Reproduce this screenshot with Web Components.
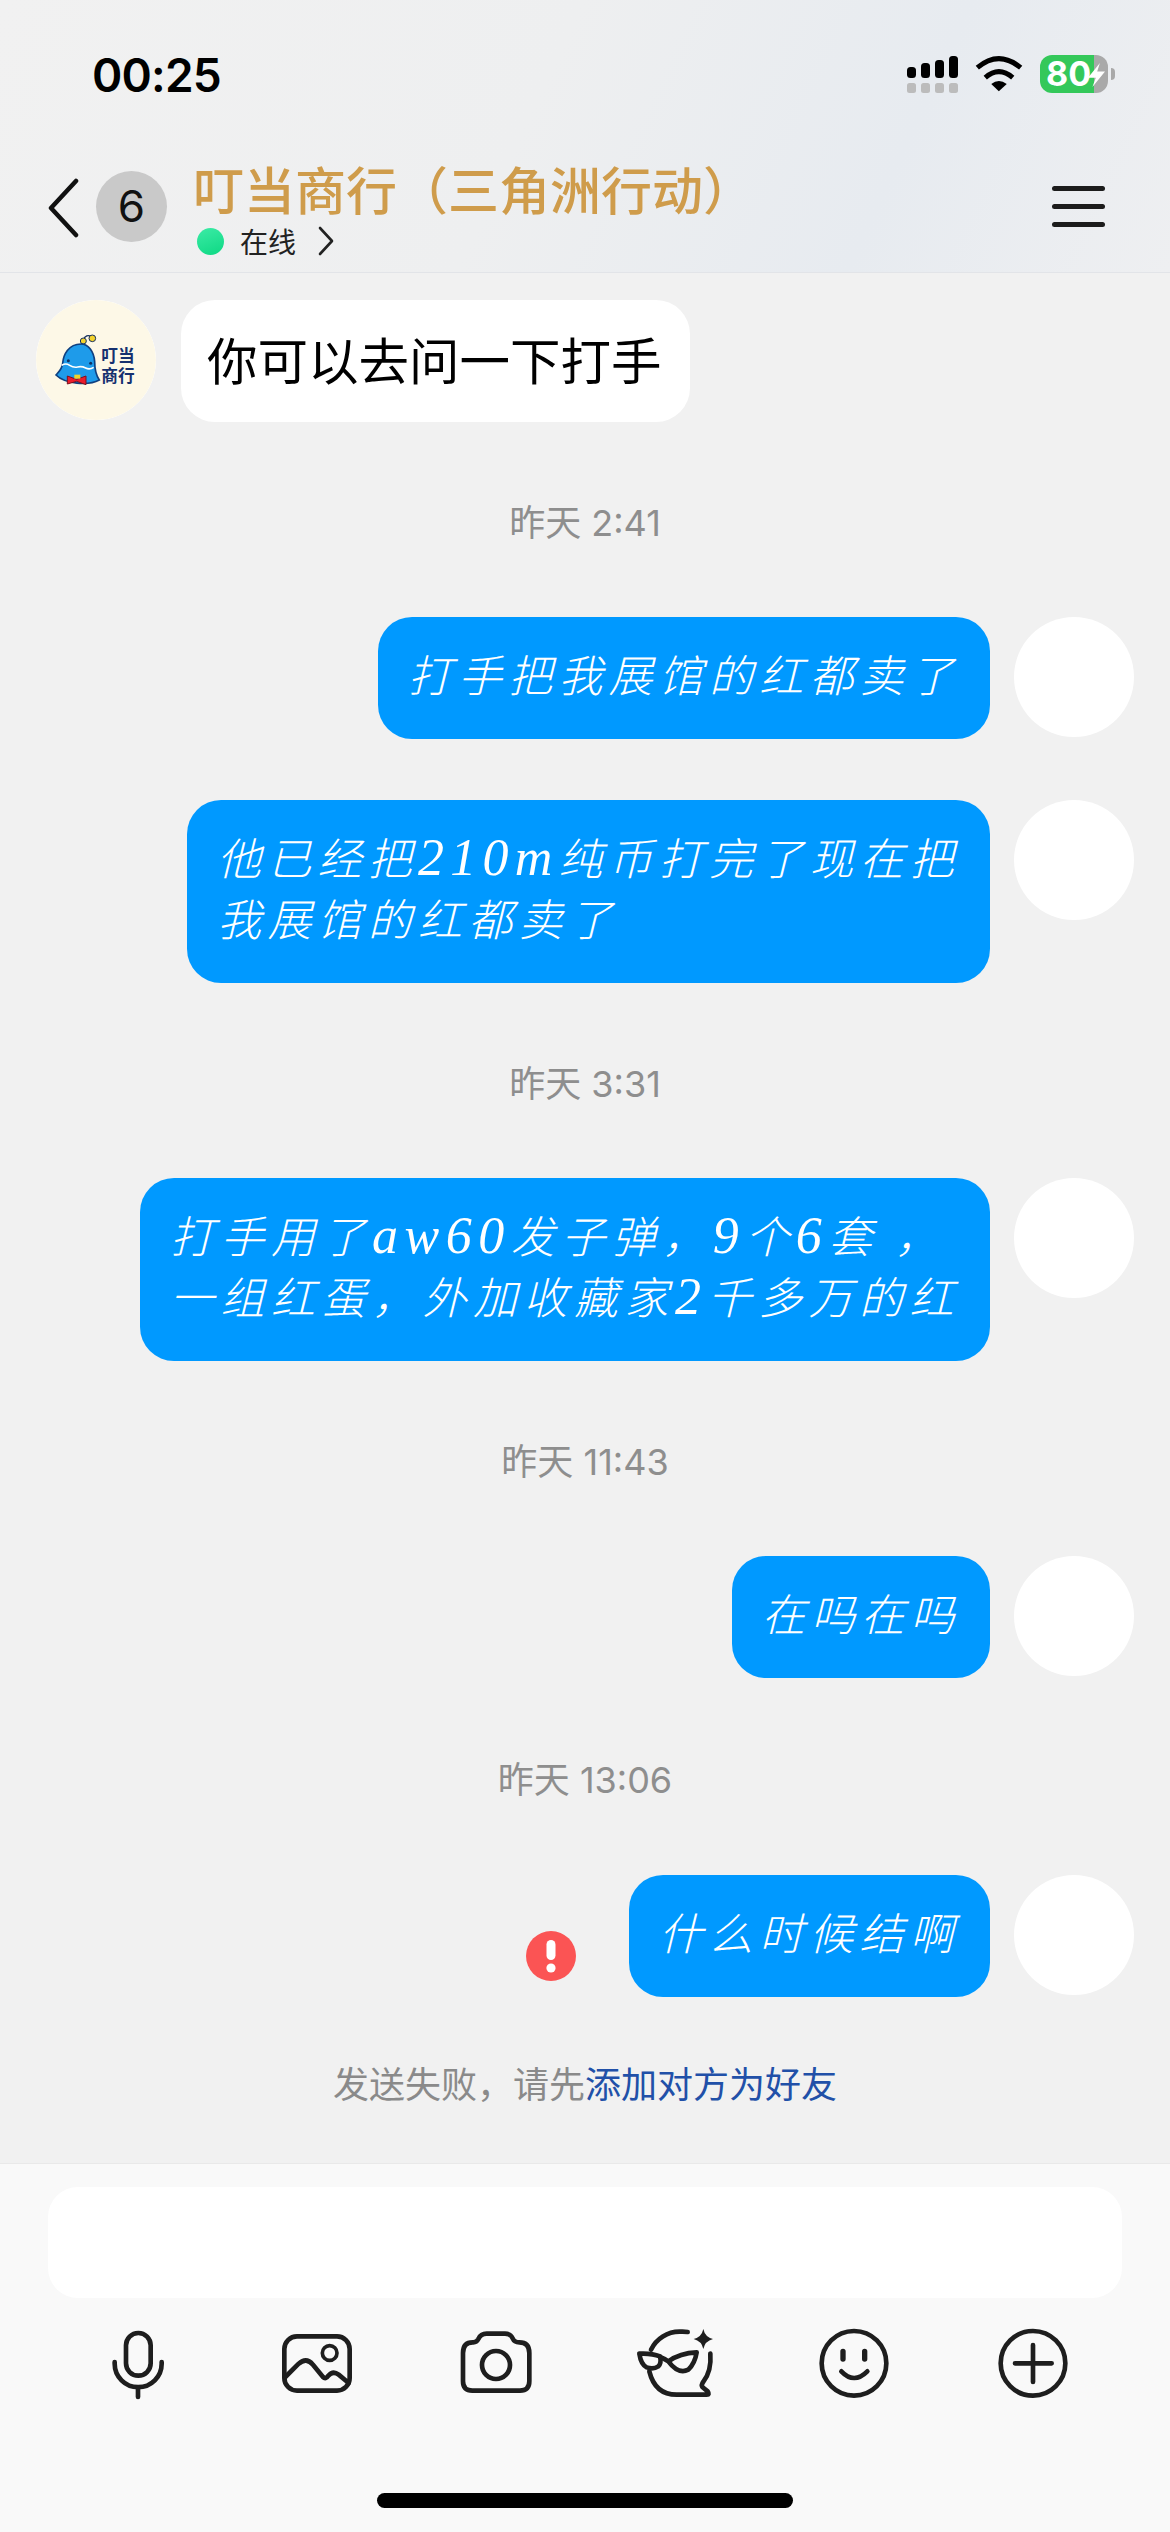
<!DOCTYPE html>
<html lang="zh">
<head>
<meta charset="utf-8">
<title>chat</title>
<style>
  html, body { margin: 0; padding: 0; }
  body {
    width: 1170px;
    height: 2532px;
    overflow: hidden;
    background: #f1f1f1;
    font-family: "Noto Sans CJK SC", "Noto Sans", sans-serif;
  }
  chat-app { height: 2532px; }
</style>
</head>
<body>
<chat-app>
  <chat-header slot="header" title-text="叮当商行（三角洲行动）" badge="6" state="在线"></chat-header>

  <chat-row side="left"><chat-logo slot="avatar"></chat-logo>你可以去问一下打手</chat-row>
  <chat-time>昨天 2:41</chat-time>
  <chat-row>打手把我展馆的红都卖了</chat-row>
  <chat-row class="next">他已经把<i>210m</i>纯币打完了现在把<br>我展馆的红都卖了</chat-row>
  <chat-time>昨天 3:31</chat-time>
  <chat-row style="--track: 6.5px">打手用了<i>aw60</i>发子弹，<i>9</i>个<i>6</i>套 ，<br>一组红蛋，外加收藏家<i>2</i>千多万的红</chat-row>
  <chat-time>昨天 11:43</chat-time>
  <chat-row style="--track: 5.6px">在吗在吗</chat-row>
  <chat-time class="tall">昨天 13:06</chat-time>
  <chat-row failed>什么时候结啊</chat-row>
  <chat-notice>发送失败，请先<a slot="link">添加对方为好友</a></chat-notice>

  <chat-composer slot="footer"></chat-composer>
</chat-app>

<script>
class ChatApp extends HTMLElement {
  constructor() {
    super();
    this.attachShadow({ mode: "open" });
    this.shadowRoot.innerHTML = `
      <style>
        :host { display: flex; flex-direction: column; }
        main { flex: 1; display: flex; flex-direction: column; padding-top: 27px; }
      </style>
      <slot name="header"></slot>
      <main><slot></slot></main>
      <slot name="footer"></slot>
    `;
  }
}

class ChatHeader extends HTMLElement {
  constructor() {
    super();
    this.attachShadow({ mode: "open" });
    const title = this.getAttribute("title-text");
    const badge = this.getAttribute("badge");
    const state = this.getAttribute("state");
    this.shadowRoot.innerHTML = `
      <style>
        :host {
          display: block;
          height: 272px;
          background: linear-gradient(115deg, #f1f1f1 0%, #eeeff0 45%, #e7ebf0 75%, #eeeff1 100%);
          border-bottom: 1px solid #e2e4e8;
          font-family: "Noto Sans CJK SC", sans-serif;
          color: #111;
        }
        .status {
          padding: 55px 55px 0 92px;
          box-sizing: border-box;
          height: 148px;
          display: flex;
          justify-content: space-between;
        }
        .clock {
          font: 600 46px/40px Inter, "Liberation Sans", sans-serif;
          color: #000;
          letter-spacing: -0.8px;
        }
        .sys { display: flex; align-items: flex-start; }
        .signal { width: 51px; height: 37px; margin-top: 1px; }
        .wifi { width: 48px; height: 36px; margin: 1px 17px 0 17px; }
        .battery {
          position: relative;
          width: 68px;
          height: 38px;
          border-radius: 12px;
          background: linear-gradient(90deg, #34c85a 0 54px, #a9a9a9 54px);
          color: #fff;
          font: 700 34px/38px Inter, "Liberation Sans", sans-serif;
          padding-left: 6px;
          box-sizing: border-box;
        }
        .battery svg { position: absolute; left: 48px; top: 8px; width: 17px; height: 24px; }
        .cap { width: 4px; height: 12px; margin: 13px 0 0 3px; background: #a9a9a9; border-radius: 0 4px 4px 0; }
        .nav {
          height: 124px;
          display: flex;
          align-items: flex-start;
          padding-left: 47px;
        }
        .back { width: 33px; height: 60px; margin-top: 30px; flex: none; }
        .badge {
          width: 71px;
          height: 71px;
          margin: 23px 26px 0 16px;
          border-radius: 50%;
          background: #c9c9c9;
          flex: none;
          text-align: center;
          font: 400 44px/71px Inter, "Liberation Sans", sans-serif;
          color: #111;
        }
        .who { flex: 1; }
        .title {
          font-size: 51px;
          line-height: 80px;
          height: 80px;
          color: #cf9c4b;
          font-weight: 500;
          white-space: nowrap;
        }
        .line { display: flex; align-items: center; height: 30px; margin-top: -2px; font-size: 28px; color: #222; }
        .dot {
          width: 27px;
          height: 27px;
          border-radius: 50%;
          margin: 0 16px 0 4px;
          background: linear-gradient(160deg, #3ceba6, #0dd883);
        }
        .more { width: 18px; height: 30px; margin-left: 21px; }
        .menu { width: 53px; margin: 38px 65px 0 0; flex: none; display: flex; flex-direction: column; gap: 13px; }
        .menu span { height: 5px; background: #1c1c1c; border-radius: 3px; }
      </style>
      <div class="status">
        <div class="clock">00:25</div>
        <div class="sys">
          <svg class="signal" viewBox="0 0 51 37">
            <g fill="#000">
              <rect x="0" y="11" width="9" height="11" rx="3.5"/>
              <rect x="14" y="7" width="9" height="15" rx="3.5"/>
              <rect x="28" y="4" width="9" height="18" rx="3.5"/>
              <rect x="42" y="0" width="9" height="22" rx="3.5"/>
            </g>
            <g fill="#bcbcbc">
              <rect x="0" y="27" width="9" height="10" rx="2.5"/>
              <rect x="14" y="27" width="9" height="10" rx="2.5"/>
              <rect x="28" y="27" width="9" height="10" rx="2.5"/>
              <rect x="42" y="27" width="9" height="10" rx="2.5"/>
            </g>
          </svg>
          <svg class="wifi" viewBox="315 78 145 108">
            <g fill="none" stroke="#000" stroke-width="15" stroke-linejoin="round">
              <path d="M322 113 Q387 58 453 113"/>
              <path d="M346 143 Q387 107 429 143"/>
            </g>
            <path d="M387 184 L364 162 Q387 144 411 162 Z" fill="#000"/>
          </svg>
          <div class="battery">80<svg viewBox="655 100 50 70"><path d="M690 100 L655 143 L678 143 L668 170 L705 125 L682 125 Z" fill="#fff"/></svg></div>
          <div class="cap"></div>
        </div>
      </div>
      <div class="nav">
        <svg class="back" viewBox="0 0 33 60"><path d="M29 3 L4 30 L29 57" fill="none" stroke="#111" stroke-width="4.5" stroke-linecap="round" stroke-linejoin="round"/></svg>
        <div class="badge">${badge}</div>
        <div class="who">
          <div class="title">${title}</div>
          <div class="line"><span class="dot"></span>${state}
            <svg class="more" viewBox="0 0 18 30"><path d="M3 2 L15 15 L3 28" fill="none" stroke="#222" stroke-width="2.6" stroke-linecap="round" stroke-linejoin="round"/></svg>
          </div>
        </div>
        <div class="menu"><span></span><span></span><span></span></div>
      </div>
    `;
  }
}

class ChatLogo extends HTMLElement {
  constructor() {
    super();
    this.attachShadow({ mode: "open" });
    this.shadowRoot.innerHTML = `
      <style>
        :host { display: block; width: 120px; height: 120px; }
        svg { display: block; width: 120px; height: 120px; }
        text { font-family: "Noto Sans CJK SC", sans-serif; font-weight: 700; font-size: 50px; fill: #15306f; }
      </style>
      <svg viewBox="48 60 360 360">
        <circle cx="228" cy="240" r="180" fill="#fdf8e7"/>
        <path d="M190 180 Q198 160 215 170" fill="none" stroke="#16305f" stroke-width="4"/>
        <circle cx="190" cy="183" r="9" fill="#f3d22b" stroke="#16305f" stroke-width="3"/>
        <circle cx="217" cy="175" r="10" fill="#f3d22b" stroke="#16305f" stroke-width="3"/>
        <path d="M183 192 C145 192 130 225 128 250 C126 268 116 275 108 285 C135 312 205 318 238 300 C228 285 224 270 224 245 C222 215 205 192 183 192 Z" fill="#1e9bea" stroke="#10407f" stroke-width="5"/>
        <path d="M125 256 q12 -8 24 0 t24 5 t24 3 t24 -2" fill="none" stroke="#fff" stroke-width="5"/>
        <circle cx="145" cy="242" r="4.5" fill="#10305f"/>
        <circle cx="212" cy="250" r="4.5" fill="#10305f"/>
        <path d="M142 288 L170 298 L198 288 L198 314 L170 304 L142 312 Z" fill="#ec1c2b" stroke="#7a1020" stroke-width="3"/>
        <rect x="163" y="284" width="18" height="12" fill="#f3d22b"/>
        <text x="244" y="246">叮当</text>
        <text x="244" y="306">商行</text>
      </svg>
    `;
  }
}

class ChatRow extends HTMLElement {
  constructor() {
    super();
    this.attachShadow({ mode: "open" });
    const left = this.getAttribute("side") === "left";
    const failed = this.hasAttribute("failed");
    this.shadowRoot.innerHTML = `
      <style>
        :host {
          display: flex;
          gap: 24px;
          justify-content: flex-end;
          padding: 0 36px;
        }
        :host([side="left"]) { justify-content: flex-start; gap: 25px; }
        :host(.next) { margin-top: 61px; }
        .avatar { width: 120px; height: 120px; border-radius: 50%; background: #fff; flex: none; overflow: hidden; }
        .bubble {
          background: #0099ff;
          color: #fff;
          border-radius: 34px;
          padding: 26px 30px 35px;
          font-size: 44px;
          line-height: 61px;
          letter-spacing: var(--track, 6.2px);
          font-style: italic;
          font-weight: 300;
          white-space: nowrap;
        }
        .left {
          background: #fff;
          color: #000;
          font-size: 50.5px;
          letter-spacing: 0;
          font-style: normal;
          font-weight: 400;
          padding: 28px 28px 33px 26px;
        }
        .err { align-self: flex-end; width: 50px; height: 50px; margin: 0 29px 16px 0; flex: none; }
        ::slotted(i) {
          font-family: "Liberation Serif", serif;
          font-size: 52px;
          line-height: 0;
        }
      </style>
      ${left ? `<div class="avatar"><slot name="avatar"></slot></div>` : ""}
      ${failed ? `<svg class="err" viewBox="0 0 50 50"><circle cx="25" cy="25" r="25" fill="#fb5454"/><rect x="20.5" y="9" width="9" height="20" rx="4.5" fill="#fff"/><circle cx="25" cy="37" r="4.6" fill="#fff"/></svg>` : ""}
      <div class="bubble ${left ? "left" : ""}"><slot></slot></div>
      ${left ? "" : `<div class="avatar"></div>`}
    `;
  }
}

class ChatTime extends HTMLElement {
  constructor() {
    super();
    this.attachShadow({ mode: "open" });
    this.shadowRoot.innerHTML = `
      <style>
        :host {
          display: flex;
          align-items: center;
          justify-content: center;
          height: 195px;
          font-family: Inter, "Noto Sans CJK SC", sans-serif;
          font-size: 36px;
          color: #8e8e8e;
        }
        :host(.tall) { height: 197px; }
      </style>
      <slot></slot>
    `;
  }
}

class ChatNotice extends HTMLElement {
  constructor() {
    super();
    this.attachShadow({ mode: "open" });
    this.shadowRoot.innerHTML = `
      <style>
        :host {
          display: flex;
          align-items: center;
          justify-content: center;
          height: 166px;
          box-sizing: border-box;
          padding-top: 4px;
          font-size: 36px;
          color: #8a8a8a;
        }
        ::slotted(a) { color: #2150a8; }
      </style>
      <slot></slot><slot name="link"></slot>
    `;
  }
}

class ChatComposer extends HTMLElement {
  constructor() {
    super();
    this.attachShadow({ mode: "open" });
    this.shadowRoot.innerHTML = `
      <style>
        :host {
          display: block;
          height: 369px;
          box-sizing: border-box;
          background: #f9f9f9;
          border-top: 1px solid #e9e9e9;
          padding: 23px 48px 0;
        }
        .input { height: 111px; background: #fff; border-radius: 30px; }
        .tools { display: grid; grid-template-columns: repeat(6, 1fr); margin-top: 20px; }
        .tools svg { display: block; width: 90px; height: 90px; margin: 0 auto; }
        .tools * { fill: none; stroke: #1e1e1e; stroke-width: 14; stroke-linecap: round; stroke-linejoin: round; }
        .tools .solid { fill: #1e1e1e; stroke: none; }
        .home { width: 416px; height: 15px; margin: 85px auto 0; background: #000; border-radius: 8px; }
      </style>
      <div class="input"></div>
      <div class="tools">
        <svg viewBox="8 55 270 270">
          <rect x="107" y="100" width="74" height="128" rx="37"/>
          <path d="M73 187 v5 a70.5 70.5 0 0 0 141 0 v-5"/>
          <path d="M143 264 V292"/>
        </svg>
        <svg viewBox="545 55 270 270">
          <rect x="582" y="110" width="196" height="163" rx="38"/>
          <circle cx="718" cy="160" r="22" style="stroke-width:11"/>
          <path d="M585 232 L625 192 Q648 172 668 195 L698 232 Q706 240 714 228 Q728 212 745 225 L775 250"/>
        </svg>
        <svg viewBox="1083 55 270 270">
          <path d="M1148 128 H1150 Q1160 128 1165 118 Q1172 102 1190 102 H1245 Q1262 102 1268 116 Q1273 128 1288 128 Q1318 128 1318 160 V245 Q1318 273 1290 273 H1147 Q1119 273 1119 245 V160 Q1119 128 1148 128 Z"/>
          <circle cx="1218" cy="196" r="42"/>
        </svg>
        <svg viewBox="75 55 270 270">
          <path d="M248 97 Q236 95 225 96 A95 95 0 0 0 138 150"/>
          <path d="M133 215 Q150 285 215 285 H305 Q315 285 308 275 L292 262 Q288 256 295 246 Q320 215 316 162"/>
          <path d="M103 162 Q140 160 165 170 Q170 190 160 200 Q145 210 125 203 Q108 195 103 162 Z"/>
          <path d="M165 172 Q180 178 190 185 Q225 160 275 158 Q270 190 250 210 Q220 225 190 185"/>
          <path class="solid" d="M295 88 Q300 112 324 118 Q300 124 295 148 Q290 124 266 118 Q290 112 295 88 Z"/>
        </svg>
        <svg viewBox="625 55 270 270">
          <circle cx="760" cy="191" r="97"/>
          <path d="M727 155 V178 M792 155 V178" style="stroke-width:16"/>
          <path d="M722 215 Q760 255 800 215"/>
        </svg>
        <svg viewBox="1161 55 270 270">
          <circle cx="1296" cy="191" r="97"/>
          <path d="M1242 191 H1352 M1296 136 V247"/>
        </svg>
      </div>
      <div class="home"></div>
    `;
  }
}

customElements.define("chat-app", ChatApp);
customElements.define("chat-header", ChatHeader);
customElements.define("chat-logo", ChatLogo);
customElements.define("chat-row", ChatRow);
customElements.define("chat-time", ChatTime);
customElements.define("chat-notice", ChatNotice);
customElements.define("chat-composer", ChatComposer);
</script>
</body>
</html>
